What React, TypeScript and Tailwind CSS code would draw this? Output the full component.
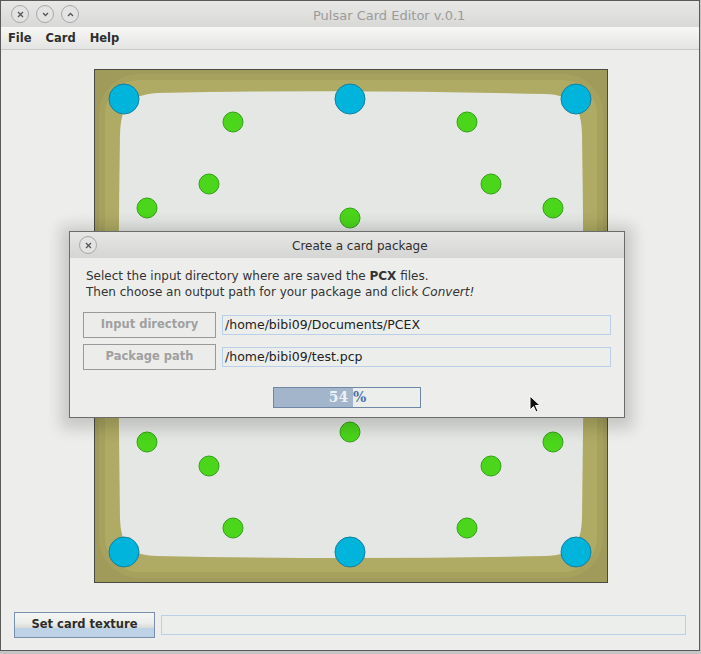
import React from "react";

const font = { fontFamily: '"DejaVu Sans", "Noto Sans", sans-serif' };

const blue: [number, number][] = [
  [29, 29], [255, 29], [481, 29],
  [29, 482], [255, 482], [481, 482],
];
const green: [number, number][] = [
  [138, 52], [114, 114], [52, 138], [255, 148],
  [372, 52], [396, 114], [458, 138],
  [52, 372], [114, 396], [138, 458], [255, 362],
  [396, 396], [458, 372], [372, 458],
];

function CardPreview() {
  return (
    <div className="w-[514px] h-[514px] border border-[#4a4a44] bg-[#a09b5a]">
      <svg width="512" height="512" viewBox="0 0 512 512">
        <rect x="4" y="4" width="504" height="504" rx="40" fill="#a6a25e" />
        <rect x="10" y="10" width="492" height="492" rx="34" fill="#afab64" />
        <path
          d="M 62 23 Q 256 19 450 24 C 478 25 486 36 487 64 Q 490 256 487 448 C 486 476 478 485 450 486 Q 256 490 62 486 C 34 485 26 476 25 448 Q 22 256 25 64 C 26 36 34 25 62 23 Z"
          fill="#e5e7e4"
        />
        {green.map(([x, y], i) => (
          <circle key={`g${i}`} cx={x} cy={y} r="10" fill="#4bd51b" stroke="#34a019" strokeWidth="1" />
        ))}
        {blue.map(([x, y], i) => (
          <circle key={`b${i}`} cx={x} cy={y} r="15" fill="#01b4db" stroke="#137f9e" strokeWidth="1" />
        ))}
      </svg>
    </div>
  );
}

function CircleButton({ children }: { children: React.ReactNode }) {
  return (
    <div className="w-[18px] h-[18px] rounded-full border border-[#a9a9a9] bg-[#e3e3e3] flex items-center justify-center">
      {children}
    </div>
  );
}

const CloseGlyph = () => (
  <svg width="9" height="9" viewBox="0 0 9 9">
    <path d="M2 2 L7 7 M7 2 L2 7" stroke="#555" strokeWidth="1.3" />
  </svg>
);

export default function App() {
  return (
    <div className="relative w-[701px] h-[654px] bg-[#c4c4c4] overflow-hidden" style={font}>
      <div className="w-[700px] h-[651px] border border-[#5a5a5a] flex flex-col bg-[#edeeec]">
        {/* title bar */}
        <div className="relative h-[26px] bg-gradient-to-b from-[#e8e8e7] to-[#d8d8d7] flex items-center pl-[10px] gap-[7px]">
          <CircleButton>
            <CloseGlyph />
          </CircleButton>
          <CircleButton>
            <svg width="9" height="9" viewBox="0 0 9 9">
              <path d="M2 3 L4.5 5.5 L7 3" stroke="#555" strokeWidth="1.3" fill="none" />
            </svg>
          </CircleButton>
          <CircleButton>
            <svg width="9" height="9" viewBox="0 0 9 9">
              <path d="M2 6 L4.5 3.5 L7 6" stroke="#555" strokeWidth="1.3" fill="none" />
            </svg>
          </CircleButton>
          <span className="absolute left-[312px] top-[5px] text-[13px] text-[#9b9b9b]">
            Pulsar Card Editor v.0.1
          </span>
        </div>

        {/* menu bar */}
        <div className="h-[23px] pt-[2px] bg-gradient-to-b from-[#f7f8f6] to-[#e4e5e3] border-b border-[#c9cac8] flex items-center pl-[7px] gap-[14px] text-[11.5px] font-bold text-[#2e2e2e]">
          <span>File</span>
          <span>Card</span>
          <span>Help</span>
        </div>

        {/* content */}
        <div className="flex-1 flex flex-col items-center pt-[19px] pl-[2px]">
          <CardPreview />
          <div className="self-stretch flex items-center pl-[11px] gap-[6px] mt-[29px]">
            <button className="w-[141px] h-[26px] border border-[#7a8fab] bg-[linear-gradient(#f5f6f4_0%,#eceeec_40%,#dadbd8_62%,#bed3e8_63%,#bdd2e7_100%)] text-[11.5px] font-bold text-[#2c2c2c]">
              Set card texture
            </button>
            <div className="w-[525px] h-[20px] border border-[#b9d0e8] bg-[#eceeec]" />
          </div>
        </div>
      </div>

      {/* dialog */}
      <div className="absolute left-[69px] top-[231px] w-[556px] h-[187px] border border-[#6c6c6c] bg-[#edeeec] shadow-[0_3px_14px_8px_rgba(0,0,0,0.16)] flex flex-col">
        <div className="relative h-[26px] bg-gradient-to-b from-[#e6e6e5] to-[#d5d5d4] flex items-center pl-[9px]">
          <CircleButton>
            <CloseGlyph />
          </CircleButton>
          <span className="absolute left-[222px] top-[5px] text-[12px] text-[#2e2e2e]">
            Create a card package
          </span>
        </div>
        <div className="flex flex-col px-[13px] pt-[10px]">
          <div className="pl-[3px] text-[12px] leading-[16px] text-[#333]">
            <div>
              Select the input directory where are saved the <b>PCX</b> files.
            </div>
            <div>
              Then choose an output path for your package and click <i>Convert!</i>
            </div>
          </div>
          <div className="flex flex-col gap-[6px] mt-[12px]">
            {[
              ["Input directory", "/home/bibi09/Documents/PCEX"],
              ["Package path", "/home/bibi09/test.pcp"],
            ].map(([label, value]) => (
              <div key={label} className="flex items-center gap-[6px]">
                <div className="w-[133px] h-[26px] border border-[#999] bg-[#ecedeb] flex items-center justify-center text-[11.5px] font-bold text-[#a0a09f]">
                  {label}
                </div>
                <div className="w-[389px] h-[20px] border border-[#b9d0e8] bg-[#eceeec] flex items-center pl-[2px] text-[12.5px] text-[#222]">
                  {value}
                </div>
              </div>
            ))}
          </div>
          <div className="flex justify-center mt-[17px] pr-[1px]">
            <div className="relative w-[148px] h-[21px] border border-[#7086a6] bg-[#eceeec]">
              <div className="absolute inset-y-0 left-0 w-[79px] bg-[#a2b5cb]" />
              <div
                className="absolute inset-0 flex items-center justify-center pl-[2px] text-[14px] font-bold"
                style={{ fontFamily: '"DejaVu Serif", serif' }}
              >
                <span className="text-[#eef1f4] whitespace-pre">54 </span>
                <span className="text-[#4a6ea8]">%</span>
              </div>
            </div>
          </div>
        </div>
      </div>

      {/* mouse pointer */}
      <svg className="absolute left-[529px] top-[395px]" width="14" height="20" viewBox="0 0 14 20">
        <path d="M1 1 L1 15 L4.5 11.5 L7 17 L9 16 L6.5 10.5 L11 10.5 Z" fill="#111" stroke="#fff" strokeWidth="1" />
      </svg>
    </div>
  );
}
